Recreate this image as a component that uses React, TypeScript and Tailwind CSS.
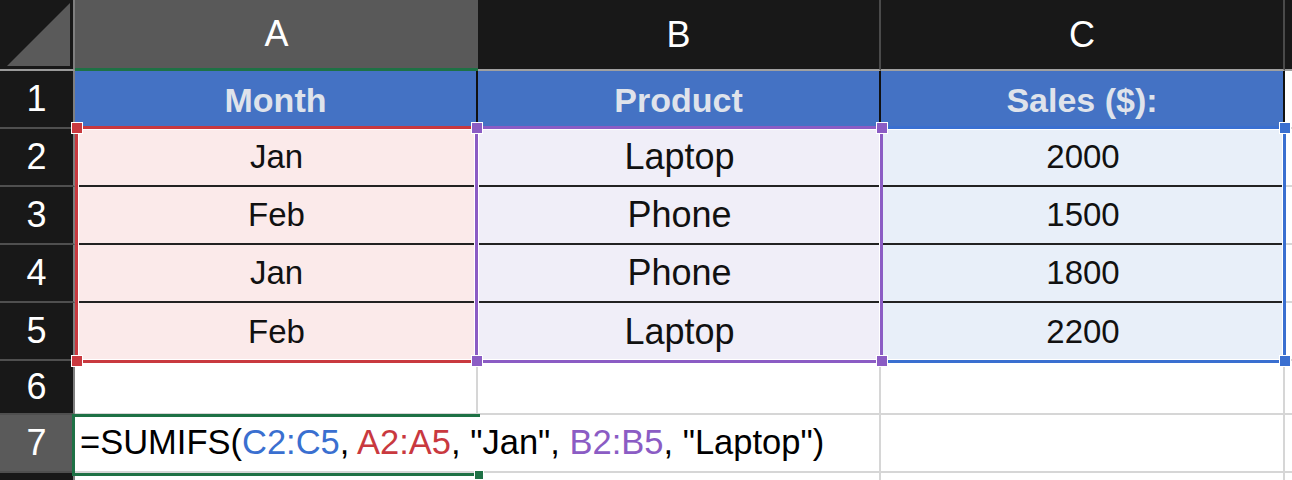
import React from 'react';

const COL = ['col-start-1', 'col-start-2', 'col-start-3', 'col-start-4', 'col-start-5'];
const ROW = [
  'row-start-1',
  'row-start-2',
  'row-start-3',
  'row-start-4',
  'row-start-5',
  'row-start-6',
  'row-start-7',
  'row-start-8',
  'row-start-9',
];

const data = [
  ['Jan', 'Laptop', '2000'],
  ['Feb', 'Phone', '1500'],
  ['Jan', 'Phone', '1800'],
  ['Feb', 'Laptop', '2200'],
];

const tints = ['bg-[#fbeaea]', 'bg-[#f0eef8]', 'bg-[#e8eff9]'];
const dataFont = ['text-[33px]', 'text-[36px]', 'text-[33px]'];

const Cell: React.FC<{ c: number; r: number; className?: string; children?: React.ReactNode }> = ({
  c,
  r,
  className = '',
  children,
}) => <div className={`${COL[c]} ${ROW[r]} ${className}`}>{children}</div>;

const Handle: React.FC<{ pos: string; color: string }> = ({ pos, color }) => (
  <span className={`absolute w-[12px] h-[12px] border-[1.5px] border-white ${color} ${pos}`} />
);

export default function App() {
  const rowHead = 'bg-[#181818] border-r-2 border-r-[#7f7f7f] border-b-2 border-b-[#4f4f4f] text-white text-[36px] flex items-center justify-center';
  const light = 'bg-white border-[#d6d6d6]';

  return (
    <div className="w-[1292px] h-[480px] overflow-hidden bg-white font-['Liberation_Sans',Arial,sans-serif]">
      <div className="grid grid-cols-[75px_403px_403px_404px_7px] grid-rows-[71px_58px_58px_58px_58px_58px_54px_58px_7px]">
        {/* column headers */}
        <Cell c={0} r={0} className="bg-[#181818] border-r-2 border-r-[#7f7f7f] border-b-2 border-b-[#9a9a9a]">
          <svg width="73" height="69" viewBox="0 0 73 69">
            <polygon points="70,3 70,66 7,66" fill="#5a5a5a" />
          </svg>
        </Cell>
        <Cell c={1} r={0} className="bg-[#595959] border-b-[3px] border-b-[#1e7145] text-white text-[36px] flex items-center justify-center">
          A
        </Cell>
        <Cell c={2} r={0} className="bg-[#181818] border-r-2 border-r-[#4a4a4a] border-b-2 border-b-[#a0a0a0] text-white text-[36px] flex items-center justify-center">
          B
        </Cell>
        <Cell c={3} r={0} className="bg-[#181818] border-r-2 border-r-[#4a4a4a] border-b-2 border-b-[#a0a0a0] text-white text-[36px] flex items-center justify-center">
          C
        </Cell>
        <Cell c={4} r={0} className="bg-[#181818] border-b-2 border-b-[#a0a0a0]" />

        {/* row headers */}
        {['1', '2', '3', '4', '5', '6'].map((n, i) => (
          <Cell key={n} c={0} r={i + 1} className={rowHead}>
            {n}
          </Cell>
        ))}
        <Cell c={0} r={7} className="bg-[#5a5a5a] border-r-2 border-r-[#7f7f7f] border-b-2 border-b-[#4f4f4f] text-white text-[36px] flex items-center justify-center">
          7
        </Cell>
        <Cell c={0} r={8} className="bg-[#181818] border-r-2 border-r-[#7f7f7f]" />

        {/* row 1: table header */}
        {['Month', 'Product', 'Sales ($):'].map((h, i) => (
          <Cell
            key={h}
            c={i + 1}
            r={1}
            className="bg-[#4472c4] border-r-2 border-r-[#111] text-[#dfe3eb] font-bold text-[34px] flex items-center justify-center"
          >
            {h}
          </Cell>
        ))}
        <Cell c={4} r={1} className={`${light} border-b-2`} />

        {/* rows 2-5 */}
        {data.map((row, ri) => (
          <React.Fragment key={ri}>
            {row.map((v, ci) => (
              <Cell
                key={ci}
                c={ci + 1}
                r={ri + 2}
                className={`${tints[ci]} ${ri < 3 ? 'border-b-2 border-b-[#222]' : ''} text-[#111] ${dataFont[ci]} flex items-center justify-center`}
              >
                {v}
              </Cell>
            ))}
            <Cell c={4} r={ri + 2} className={`${light} border-b-2`} />
          </React.Fragment>
        ))}

        {/* row 6 */}
        <Cell c={1} r={6} className={`${light} border-r-2 border-b-2`} />
        <Cell c={2} r={6} className={`${light} border-r-2 border-b-2`} />
        <Cell c={3} r={6} className={`${light} border-r-2 border-b-2`} />
        <Cell c={4} r={6} className={`${light} border-b-2`} />

        {/* row 7 */}
        <Cell c={2} r={7} className={`${light} border-r-2 border-b-2`} />
        <Cell c={3} r={7} className={`${light} border-r-2 border-b-2`} />
        <Cell c={4} r={7} className={`${light} border-b-2`} />
        <Cell c={1} r={7} className="relative z-10 border-b-2 border-[#d6d6d6] flex items-center pl-[5px] whitespace-nowrap text-[34.5px] text-black">
          <span>
            =SUMIFS(<span className="text-[#3a6fd0]">C2:C5</span>, <span className="text-[#c9393f]">A2:A5</span>, "Jan",{' '}
            <span className="text-[#8b5cc4]">B2:B5</span>, "Laptop")
          </span>
        </Cell>

        {/* row 8 (cut off) */}
        <Cell c={1} r={8} className={`${light} border-r-2`} />
        <Cell c={2} r={8} className={`${light} border-r-2`} />
        <Cell c={3} r={8} className={`${light} border-r-2`} />
        <Cell c={4} r={8} className="bg-white" />

        {/* range highlights */}
        <div className="col-start-2 row-start-3 row-span-4 -mt-[3px] -mb-[2px] relative border-[3px] border-[#c9393f] shadow-[inset_0_0_0_1px_white]">
          <Handle pos="-left-[7.5px] -top-[7px]" color="bg-[#c9393f]" />
          <Handle pos="-left-[7.5px] -bottom-[7px]" color="bg-[#c9393f]" />
        </div>
        <div className="col-start-4 row-start-3 row-span-4 -mt-[3px] -mb-[2px] -ml-[2px] -mr-[1px] relative border-[3px] border-[#3a6fd0] shadow-[inset_0_0_0_1px_white]">
          <Handle pos="-right-[7.5px] -top-[7px]" color="bg-[#3a6fd0]" />
          <Handle pos="-right-[7.5px] -bottom-[7px]" color="bg-[#3a6fd0]" />
        </div>
        <div className="col-start-3 row-start-3 row-span-4 -mt-[3px] -mb-[2px] -ml-[3px] -mr-[2px] relative border-[3px] border-[#8b5cc4] shadow-[inset_0_0_0_1px_white]">
          <Handle pos="-left-[7.5px] -top-[7px]" color="bg-[#8b5cc4]" />
          <Handle pos="-right-[7.5px] -top-[7px]" color="bg-[#8b5cc4]" />
          <Handle pos="-left-[7.5px] -bottom-[7px]" color="bg-[#8b5cc4]" />
          <Handle pos="-right-[7.5px] -bottom-[7px]" color="bg-[#8b5cc4]" />
        </div>

        {/* active cell A7 */}
        <div className="col-start-2 row-start-8 -mt-[1px] -mb-[3px] -ml-[3px] -mr-[2px] relative z-20 border-t-[3px] border-l-[3px] border-b-[3px] border-[#1e7145]">
          <span className="absolute -right-[4px] -bottom-[7px] w-[10px] h-[10px] bg-[#1e7145] border border-white" />
        </div>
      </div>
    </div>
  );
}
